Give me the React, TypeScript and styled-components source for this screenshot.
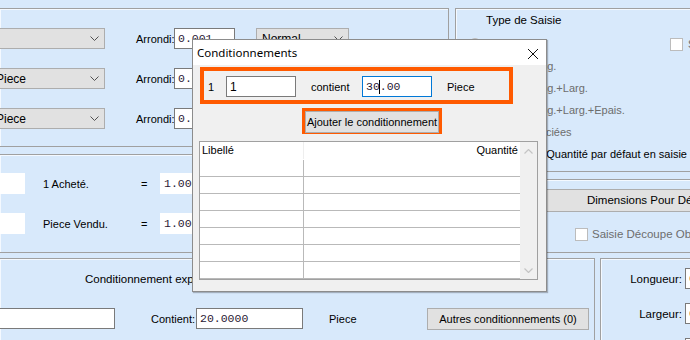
import React from 'react'
import styled, { createGlobalStyle } from 'styled-components'

const GlobalStyle = createGlobalStyle`
  body {
    margin: 0;
    background: #d8e9fb;
  }
`

const Chevron = ({ color = '#505050' }: { color?: string }) => (
  <svg width="9" height="5" viewBox="0 0 9 5">
    <path d="M0.5 0.5 L4.5 4.5 L8.5 0.5" fill="none" stroke={color} strokeWidth="1" />
  </svg>
)

const ScrollArrow = ({ up }: { up?: boolean }) => (
  <svg width="9" height="5" viewBox="0 0 9 5">
    <path
      d={up ? 'M0.5 4.5 L4.5 0.5 L8.5 4.5' : 'M0.5 0.5 L4.5 4.5 L8.5 0.5'}
      fill="none"
      stroke="#c4c4c4"
      strokeWidth="1.2"
    />
  </svg>
)

const CloseIcon = () => (
  <svg width="10" height="10" viewBox="0 0 10 10">
    <path d="M0 0 L10 10 M10 0 L0 10" stroke="#111" strokeWidth="1" />
  </svg>
)

const App = () => (
  <>
    <GlobalStyle />
    <Screen>
      <TopArea>
        <LeftColumn>
          <TopPanel>
            <FormRow>
              <Combo $width={115} $offset={-10}>
                <span />
                <Chevron />
              </Combo>
              <Label $width={38} $ml={31}>Arrondi:</Label>
              <Field $width={61}>0.001</Field>
              <Combo $width={93} $offset={21}>
                Normal
                <Chevron />
              </Combo>
            </FormRow>
            <FormRow>
              <Combo $width={115} $offset={-10}>
                Piece
                <Chevron />
              </Combo>
              <Label $width={38} $ml={31}>Arrondi:</Label>
              <Field $width={61}>0.001</Field>
            </FormRow>
            <FormRow>
              <Combo $width={115} $offset={-10}>
                Piece
                <Chevron />
              </Combo>
              <Label $width={38} $ml={31}>Arrondi:</Label>
              <Field $width={61}>0.001</Field>
            </FormRow>
          </TopPanel>
          <MidPanel>
            <FormRow>
              <Field $width={25} $plain />
              <Label $width={98} $ml={18}>1 Acheté.</Label>
              <Label $width={19}>=</Label>
              <Field $width={80} $plain>1.000</Field>
            </FormRow>
            <FormRow>
              <Field $width={25} $plain />
              <Label $width={98} $ml={18}>Piece Vendu.</Label>
              <Label $width={19}>=</Label>
              <Field $width={80} $plain>1.000</Field>
            </FormRow>
          </MidPanel>
        </LeftColumn>
        <RightColumn>
          <TypePanel>
            <GroupTitle>Type de Saisie</GroupTitle>
            <OptionList>
              <OptionRow>
                <Radio />
                <OptionText $width={179}>Normal</OptionText>
                <Check />
                <OptionText>Saisie</OptionText>
              </OptionRow>
              <OptionRow>
                <Radio />
                <OptionText>Selon la Long.</OptionText>
              </OptionRow>
              <OptionRow>
                <Radio />
                <OptionText>Selon la Long.+Larg.</OptionText>
              </OptionRow>
              <OptionRow>
                <Radio />
                <OptionText>Selon la Long.+Larg.+Epais.</OptionText>
              </OptionRow>
              <OptionRow>
                <Radio />
                <OptionText>Pièces Associées</OptionText>
              </OptionRow>
              <OptionRow>
                <Check />
                <OptionText $active>Proposer la Quantité par défaut en saisie de découpe</OptionText>
              </OptionRow>
            </OptionList>
          </TypePanel>
          <CutPanel>
            <WideButton>Dimensions Pour Découpe</WideButton>
            <CheckRow>
              <Check />
              <OptionText>Saisie Découpe Obligatoire</OptionText>
            </CheckRow>
          </CutPanel>
        </RightColumn>
      </TopArea>
      <BottomArea>
        <PackPanel>
          <PackTitle>Conditionnement exprimé en unité de vente</PackTitle>
          <FormRow>
            <Field $width={125} $offset={-10} />
            <Label $width={45} $ml={36}>Contient:</Label>
            <Field $width={107}>20.0000</Field>
            <Label $width={60} $ml={26}>Piece</Label>
            <Button $width={162} $ml={38}>Autres conditionnements (0)</Button>
          </FormRow>
        </PackPanel>
        <SizePanel>
          <SizeRow>
            <Label $width={81} $right>Longueur:</Label>
            <Field $width={60} $ml={3} $red>0.00</Field>
          </SizeRow>
          <SizeRow>
            <Label $width={81} $right>Largeur:</Label>
            <Field $width={60} $ml={3} $red>0.00</Field>
          </SizeRow>
          <SizeRow>
            <Label $width={81} $right>Epaisseur:</Label>
            <Field $width={60} $ml={3} $red>0.00</Field>
          </SizeRow>
        </SizePanel>
      </BottomArea>

      <Dialog>
        <TitleBar>
          <DialogTitle>Conditionnements</DialogTitle>
          <CloseButton>
            <CloseIcon />
          </CloseButton>
        </TitleBar>
        <DialogBody>
          <Highlight>
            <Label $width={18}>1</Label>
            <Field $width={70} $sans>1</Field>
            <Label $width={51} $ml={15}>contient</Label>
            <Field $width={70} $focus>
              30<Caret />.00
            </Field>
            <Label $width={40} $ml={15}>Piece</Label>
          </Highlight>
          <ButtonFrame>
            <Button $width={134}>Ajouter le conditionnement</Button>
          </ButtonFrame>
          <Grid>
            <GridBody>
              <GridRow $header>
                <GridCell $header>Libellé</GridCell>
                <GridCell $right>Quantité</GridCell>
              </GridRow>
              {Array.from({ length: 8 }).map((_, i) => (
                <GridRow key={i}>
                  <GridCell />
                  <GridCell />
                </GridRow>
              ))}
            </GridBody>
            <ScrollBar>
              <ScrollArrow up />
              <ScrollArrow />
            </ScrollBar>
          </Grid>
        </DialogBody>
      </Dialog>
    </Screen>
  </>
)

const Screen = styled.div`
  position: relative;
  box-sizing: border-box;
  width: 690px;
  height: 340px;
  overflow: hidden;
  padding-top: 8px;
  background: #d8e9fb;
  font-family: 'Liberation Sans', Arial, sans-serif;
  font-size: 11px;
  color: #000;
`

const TopArea = styled.div`
  display: flex;
  gap: 6px;
  height: 245px;
`

const LeftColumn = styled.div`
  display: flex;
  flex-direction: column;
  gap: 7px;
  width: 449px;
  flex-shrink: 0;
`

const RightColumn = styled.div`
  display: flex;
  flex-direction: column;
  gap: 7px;
  width: 260px;
  flex-shrink: 0;
`

const Panel = styled.div`
  box-sizing: border-box;
  border: 1px solid #a0a0a0;
  box-shadow: inset 1px 1px 0 #f4f9ff;
`

const TopPanel = styled(Panel)`
  height: 139px;
  border-left: none;
  padding-top: 19px;
  display: flex;
  flex-direction: column;
  gap: 19px;
`

const MidPanel = styled(Panel)`
  height: 99px;
  border-left: none;
  padding-top: 18px;
  display: flex;
  flex-direction: column;
  gap: 19px;
`

const FormRow = styled.div`
  display: flex;
  align-items: center;
  height: 21px;
`

const Label = styled.span<{ $width: number; $ml?: number; $right?: boolean }>`
  flex-shrink: 0;
  width: ${p => p.$width}px;
  margin-left: ${p => p.$ml ?? 0}px;
  text-align: ${p => (p.$right ? 'right' : 'left')};
  white-space: nowrap;
`

const Combo = styled.div<{ $width: number; $offset?: number }>`
  box-sizing: border-box;
  display: flex;
  align-items: center;
  justify-content: space-between;
  flex-shrink: 0;
  width: ${p => p.$width}px;
  height: 21px;
  margin-left: ${p => p.$offset ?? 0}px;
  padding: 0 5px;
  background: #e1e1e1;
  border: 1px solid #adadad;
  font-size: 12px;
`

const Field = styled.div<{
  $width: number
  $offset?: number
  $ml?: number
  $plain?: boolean
  $focus?: boolean
  $sans?: boolean
  $red?: boolean
}>`
  box-sizing: border-box;
  display: flex;
  align-items: center;
  flex-shrink: 0;
  width: ${p => p.$width}px;
  height: 21px;
  margin-left: ${p => p.$offset ?? p.$ml ?? 0}px;
  padding-left: 3px;
  background: #fff;
  border: 1px solid
    ${p => (p.$plain ? '#fff' : p.$focus ? '#0078d7' : '#7a7a7a')};
  font-family: ${p =>
    p.$sans ? "'Liberation Sans', Arial, sans-serif" : "'Liberation Mono', monospace"};
  font-size: ${p => (p.$sans ? '12px' : '11.5px')};
  color: ${p => (p.$sans ? '#000' : p.$red ? '#8a1020' : '#2a1834')};
  white-space: nowrap;
`

const Caret = styled.span`
  display: inline-block;
  width: 1px;
  height: 14px;
  margin: 0 -0.5px;
  background: #000;
`

const TypePanel = styled(Panel)`
  height: 164px;
  border-right: none;
  padding: 5px 0 0 30px;
`

const GroupTitle = styled.div`
  height: 13px;
  line-height: 13px;
  font-size: 11.5px;
`

const OptionList = styled.div`
  margin: 6px 0 0 -17px;
  display: flex;
  flex-direction: column;
`

const OptionRow = styled.div`
  display: flex;
  align-items: center;
  gap: 5px;
  height: 22px;
`

const Radio = styled.span`
  box-sizing: border-box;
  width: 12px;
  height: 12px;
  border-radius: 50%;
  border: 1px solid #bcbcbc;
  background: #fff;
  flex-shrink: 0;
`

const Check = styled.span`
  box-sizing: border-box;
  width: 13px;
  height: 13px;
  border: 1px solid #bcbcbc;
  background: #fff;
  flex-shrink: 0;
`

const OptionText = styled.span<{ $width?: number; $active?: boolean }>`
  width: ${p => (p.$width ? `${p.$width}px` : 'auto')};
  flex-shrink: 0;
  color: ${p => (p.$active ? '#000' : '#6d6d6d')};
  white-space: nowrap;
`

const CutPanel = styled(Panel)`
  height: 74px;
  border-right: none;
  padding-top: 9px;
`

const WideButton = styled.div`
  box-sizing: border-box;
  margin-left: 3px;
  width: 330px;
  height: 23px;
  line-height: 21px;
  padding-left: 127px;
  background: #e1e1e1;
  border: 1px solid #adadad;
  font-size: 11.5px;
  white-space: nowrap;
`

const CheckRow = styled.div`
  display: flex;
  align-items: center;
  gap: 4px;
  height: 14px;
  margin-top: 15px;
  padding-left: 119px;
  font-size: 11.5px;
`

const BottomArea = styled.div`
  display: flex;
  gap: 5px;
  margin-top: 5px;
  height: 100px;
`

const PackPanel = styled(Panel)`
  width: 595px;
  flex-shrink: 0;
  border-left: none;
  padding-top: 13px;
`

const PackTitle = styled.div`
  margin-left: 85px;
  height: 14px;
  line-height: 14px;
  margin-bottom: 22px;
  font-size: 11.5px;
  white-space: nowrap;
`

const Button = styled.div<{ $width: number; $ml?: number }>`
  box-sizing: border-box;
  flex-shrink: 0;
  width: ${p => p.$width}px;
  height: 22px;
  margin-left: ${p => p.$ml ?? 0}px;
  line-height: 20px;
  text-align: center;
  background: #e1e1e1;
  border: 1px solid #adadad;
  font-size: 11px;
  white-space: nowrap;
`

const SizePanel = styled(Panel)`
  width: 120px;
  flex-shrink: 0;
  border-right: none;
  padding-top: 9px;
  display: flex;
  flex-direction: column;
  gap: 14px;
`

const SizeRow = styled.div`
  display: flex;
  align-items: center;
  height: 21px;
  font-size: 11.5px;
`

const Dialog = styled.div`
  position: absolute;
  left: 192px;
  top: 39px;
  box-sizing: border-box;
  width: 355px;
  height: 253px;
  background: #f0f0f0;
  border: 1px solid #8c8c8c;
  box-shadow: 1px 1px 1px rgba(0, 0, 0, 0.25);
  display: flex;
  flex-direction: column;
`

const TitleBar = styled.div`
  display: flex;
  align-items: center;
  justify-content: space-between;
  height: 25px;
  padding: 0 8px 0 4px;
  background: #fff;
`

const DialogTitle = styled.span`
  font-family: 'Noto Sans', 'Open Sans', sans-serif;
  font-size: 11.5px;
  color: #000;
`

const CloseButton = styled.span`
  display: flex;
  margin-top: 2px;
`

const DialogBody = styled.div`
  padding-top: 2px;
  display: flex;
  flex-direction: column;
`

const Highlight = styled.div`
  box-sizing: border-box;
  display: flex;
  align-items: center;
  width: 313px;
  height: 37px;
  margin-left: 7px;
  padding: 2px 0 0 4px;
  border: 4px solid #ff5a00;
  font-size: 11px;
`

const ButtonFrame = styled.div`
  box-sizing: border-box;
  width: 140px;
  height: 26px;
  margin: 4px 0 0 109px;
  border: 3px solid #ff5a00;
`

const Grid = styled.div`
  box-sizing: border-box;
  display: flex;
  width: 339px;
  height: 139px;
  margin: 7px 0 0 6px;
  border: 1px solid #a0a0a0;
  background: #fff;
`

const GridBody = styled.div`
  flex: 1;
  overflow: hidden;
`

const GridRow = styled.div<{ $header?: boolean }>`
  box-sizing: border-box;
  display: grid;
  grid-template-columns: 104px 1fr;
  height: ${p => (p.$header ? 18 : 17)}px;
  border-bottom: 1px solid ${p => (p.$header ? '#fff' : '#b9b9b9')};
`

const GridCell = styled.div<{ $header?: boolean; $right?: boolean }>`
  box-sizing: border-box;
  padding: 0 2px;
  line-height: 17px;
  font-size: 11px;
  text-align: ${p => (p.$right ? 'right' : 'left')};
  &:first-child {
    border-right: 1px solid ${p => (p.$header ? '#eeeeee' : '#b9b9b9')};
  }
`

const ScrollBar = styled.div`
  box-sizing: border-box;
  width: 17px;
  flex-shrink: 0;
  display: flex;
  flex-direction: column;
  align-items: center;
  justify-content: space-between;
  padding: 7px 0 6px;
  background: #f0f0f0;
`

export default App
